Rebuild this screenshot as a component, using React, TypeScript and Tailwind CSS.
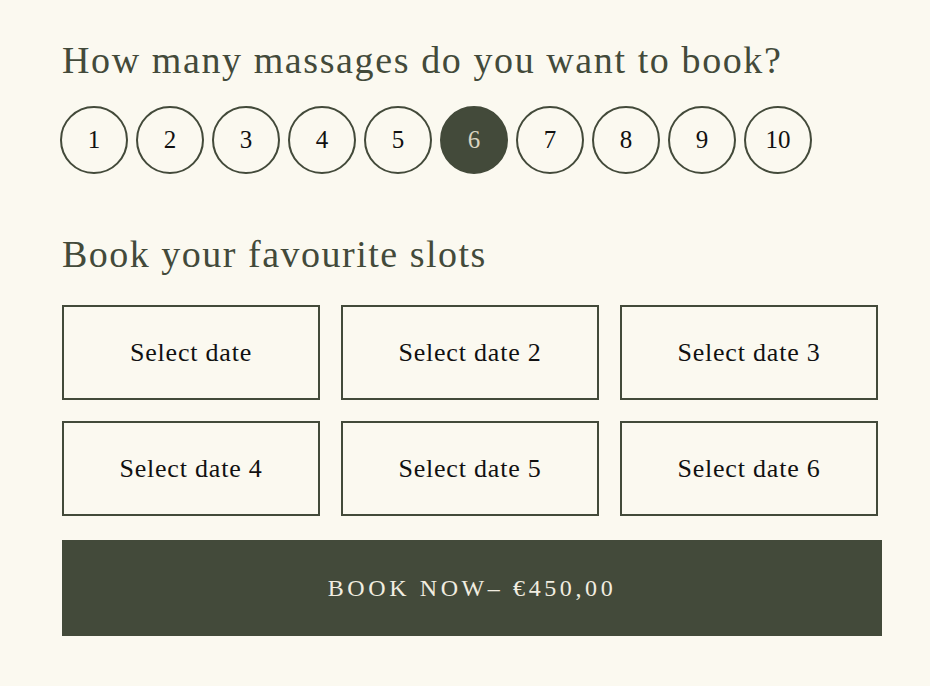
const counts = [1, 2, 3, 4, 5, 6, 7, 8, 9, 10];
const slots = ['Select date', 'Select date 2', 'Select date 3', 'Select date 4', 'Select date 5', 'Select date 6'];

export default function App() {
  const selected = 6;

  return (
    <div
      className="min-h-[686px] w-[930px] bg-[#fbf9f0] pl-[62px] pt-[36px]"
      style={{ fontFamily: '"Liberation Serif", "DejaVu Serif", serif' }}
    >
      <h2 className="text-[38px] leading-[48px] tracking-[1.6px] text-[#434a3a]">
        How many massages do you want to book?
      </h2>

      <div className="mt-[22px] flex gap-[8px] -ml-[2px]">
        {counts.map((n) => (
          <button
            key={n}
            className={
              n === selected
                ? 'flex h-[68px] w-[68px] items-center justify-center rounded-full border-2 border-[#434a3a] bg-[#434a3a] text-[25px] text-[#d8d3c0]'
                : 'flex h-[68px] w-[68px] items-center justify-center rounded-full border-2 border-[#434a3a] text-[25px] text-[#111]'
            }
          >
            {n}
          </button>
        ))}
      </div>

      <h2 className="mt-[56px] text-[38px] leading-[48px] tracking-[1.5px] text-[#434a3a]">
        Book your favourite slots
      </h2>

      <div className="mt-[27px] grid w-[816px] grid-cols-3 gap-x-[21px] gap-y-[21px]">
        {slots.map((s) => (
          <button
            key={s}
            className="flex h-[95px] items-center justify-center border-2 border-[#434a3a] text-[26px] tracking-[0.8px] text-[#111]"
          >
            {s}
          </button>
        ))}
      </div>

      <button className="mt-[24px] flex h-[96px] w-[820px] items-center justify-center bg-[#434a3a] text-[24px] tracking-[3.6px] text-[#f1ede0]">
        BOOK NOW– €450,00
      </button>
    </div>
  );
}
